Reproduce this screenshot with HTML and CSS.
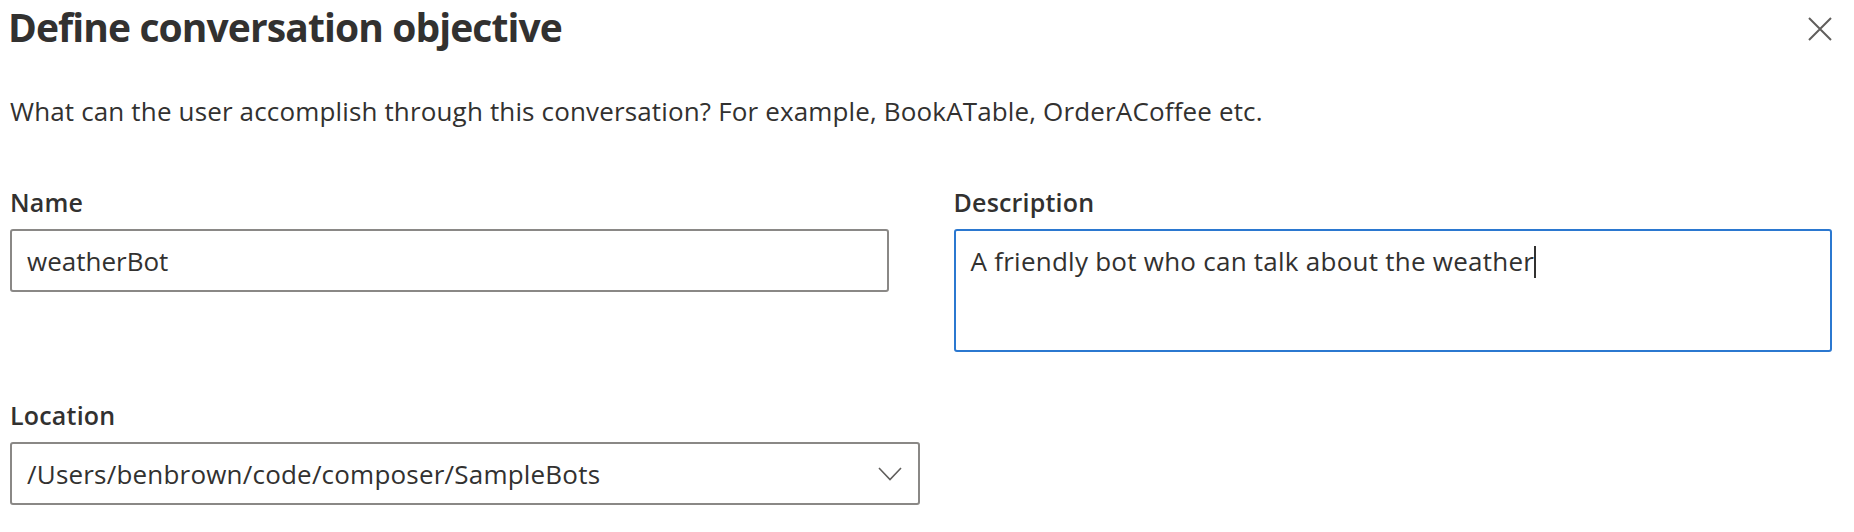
FILE: index.html
```html
<!DOCTYPE html>
<html lang="en">
<head>
<meta charset="utf-8">
<title>Define conversation objective</title>
<link rel="stylesheet" href="styles.css">
</head>
<body>
<div class="dialog">
  <div class="header">
    <h1 class="title">Define conversation objective</h1>
    <button class="close" aria-label="Close">
      <svg width="24" height="24" viewBox="0 0 24 24"><path d="M1 1 L23 23 M23 1 L1 23" stroke="#605e5c" stroke-width="2" fill="none"/></svg>
    </button>
  </div>
  <p class="subtext">What can the user accomplish through this conversation? For example, BookATable, OrderACoffee etc.</p>
  <div class="row">
    <div class="field">
      <label class="label">Name</label>
      <div class="input">weatherBot</div>
    </div>
    <div class="field">
      <label class="label">Description</label>
      <div class="textarea focused">A friendly bot who can talk about the weather<span class="caret"></span></div>
    </div>
  </div>
  <div class="field location">
    <label class="label">Location</label>
    <div class="input dropdown">
      <span class="path">/Users/benbrown/code/composer/SampleBots</span>
      <svg class="chevron" width="24" height="14" viewBox="0 0 24 14"><path d="M1 1 L12 12.5 L23 1" stroke="#605e5c" stroke-width="1.6" fill="none"/></svg>
    </div>
  </div>
</div>
</body>
</html>
```
FILE: styles.css
```css
html, body {
  margin: 0;
  padding: 0;
  background: #ffffff;
}
body {
  font-family: "Open Sans", "Noto Sans", sans-serif;
  color: #323130;
}
.dialog {
  padding: 0 22px 0 10px;
}
.header {
  display: flex;
  justify-content: space-between;
  align-items: flex-start;
}
.title {
  margin: 0 0 0 -2px;
  font-size: 39px;
  line-height: 54px;
  font-weight: 700;
  letter-spacing: -0.9px;
}
.close {
  margin: 17px 0 0 0;
  padding: 0;
  border: none;
  background: none;
  width: 24px;
  height: 24px;
  display: block;
}
.close svg { display: block; }
.subtext {
  margin: 39px 0 0 0;
  font-size: 26px;
  line-height: 36px;
  letter-spacing: 0.15px;
}
.row {
  display: grid;
  grid-template-columns: 1fr 1fr;
  column-gap: 65px;
  margin-top: 55px;
}
.field {
  display: flex;
  flex-direction: column;
}
.label {
  font-size: 25px;
  line-height: 36px;
  font-weight: 600;
  letter-spacing: 0.2px;
  margin-bottom: 9px;
}
.input {
  height: 63px;
  box-sizing: border-box;
  border: 2px solid #8a8886;
  border-radius: 3px;
  padding: 0 15px;
  font-size: 26px;
  line-height: 36px;
  display: flex;
  align-items: center;
}
.textarea {
  height: 123px;
  box-sizing: border-box;
  border: 2px solid #2b78d0;
  border-radius: 3px;
  padding: 12px 15px;
  font-size: 26px;
  line-height: 36px;
  letter-spacing: 0.25px;
}
.caret {
  display: inline-block;
  width: 2px;
  height: 32px;
  background: #323130;
  vertical-align: -7px;
}
.location {
  margin-top: 45px;
  width: 910px;
}
.dropdown {
  justify-content: space-between;
  padding-right: 16px;
}
.path {
  color: #323130;
  white-space: nowrap;
  letter-spacing: 0.2px;
}
.chevron { display: block; }
```
